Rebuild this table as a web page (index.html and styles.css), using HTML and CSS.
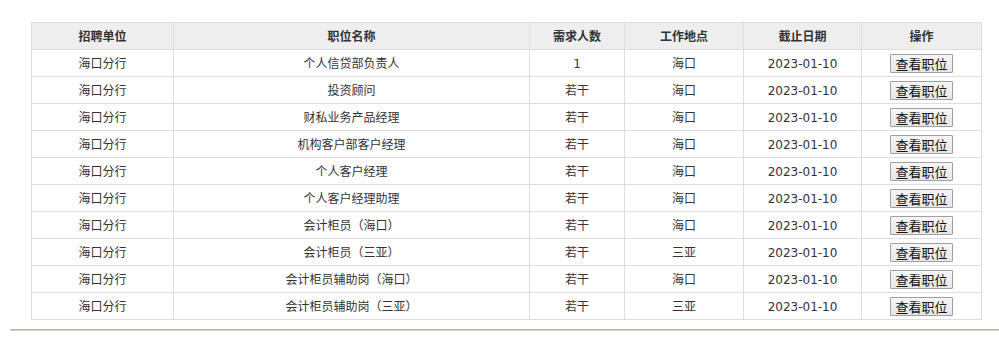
FILE: index.html
```html
<!DOCTYPE html>
<html lang="zh">
<head>
<meta charset="utf-8">
<link rel="stylesheet" href="styles.css">
</head>
<body>
<div class="page">
  <div class="wrap">
    <table class="jobs">
      <colgroup>
        <col class="c1"><col class="c2"><col class="c3"><col class="c4"><col class="c5"><col class="c6">
      </colgroup>
      <thead>
        <tr><th>招聘单位</th><th>职位名称</th><th>需求人数</th><th>工作地点</th><th>截止日期</th><th>操作</th></tr>
      </thead>
      <tbody>
        <tr><td>海口分行</td><td>个人信贷部负责人</td><td>1</td><td>海口</td><td>2023-01-10</td><td class="op"><button class="btn">查看职位</button></td></tr>
        <tr><td>海口分行</td><td>投资顾问</td><td>若干</td><td>海口</td><td>2023-01-10</td><td class="op"><button class="btn">查看职位</button></td></tr>
        <tr><td>海口分行</td><td>财私业务产品经理</td><td>若干</td><td>海口</td><td>2023-01-10</td><td class="op"><button class="btn">查看职位</button></td></tr>
        <tr><td>海口分行</td><td>机构客户部客户经理</td><td>若干</td><td>海口</td><td>2023-01-10</td><td class="op"><button class="btn">查看职位</button></td></tr>
        <tr><td>海口分行</td><td>个人客户经理</td><td>若干</td><td>海口</td><td>2023-01-10</td><td class="op"><button class="btn">查看职位</button></td></tr>
        <tr><td>海口分行</td><td>个人客户经理助理</td><td>若干</td><td>海口</td><td>2023-01-10</td><td class="op"><button class="btn">查看职位</button></td></tr>
        <tr><td>海口分行</td><td>会计柜员（海口）</td><td>若干</td><td>海口</td><td>2023-01-10</td><td class="op"><button class="btn">查看职位</button></td></tr>
        <tr><td>海口分行</td><td>会计柜员（三亚）</td><td>若干</td><td>三亚</td><td>2023-01-10</td><td class="op"><button class="btn">查看职位</button></td></tr>
        <tr><td>海口分行</td><td>会计柜员辅助岗（海口）</td><td>若干</td><td>海口</td><td>2023-01-10</td><td class="op"><button class="btn">查看职位</button></td></tr>
        <tr><td>海口分行</td><td>会计柜员辅助岗（三亚）</td><td>若干</td><td>三亚</td><td>2023-01-10</td><td class="op"><button class="btn">查看职位</button></td></tr>
      </tbody>
    </table>
  </div>
  <div class="rule"></div>
</div>
</body>
</html>
```
FILE: styles.css
```css
html, body {
  margin: 0;
  padding: 0;
  background: #fff;
}
.page {
  font-family: "DejaVu Sans", "Noto Sans CJK SC", sans-serif;
  font-size: 12px;
  color: #333;
  overflow: hidden;
}
.wrap {
  padding: 22px 0 0 31px;
}
.jobs {
  border-collapse: collapse;
  table-layout: fixed;
  width: 950px;
}
.c1 { width: 142px; }
.c2 { width: 356px; }
.c3 { width: 95px; }
.c4 { width: 119px; }
.c5 { width: 118px; }
.c6 { width: 120px; }
.jobs th, .jobs td {
  border: 1px solid #ddd;
  height: 27px;
  padding: 2px 0 0;
  box-sizing: border-box;
  text-align: center;
  vertical-align: middle;
  line-height: 16px;
  white-space: nowrap;
}
.jobs td.op {
  padding: 0;
}
.jobs th {
  background: #eeeeee;
  font-weight: bold;
  color: #333;
}
.jobs td {
  color: #333;
}
.btn {
  font-family: "Noto Sans CJK SC", sans-serif;
  font-size: 13px;
  color: #111;
  height: 19px;
  width: 63px;
  padding: 0;
  line-height: 15px;
  border: 1px solid #a0a0a0;
  background: linear-gradient(#f6f6f6, #e6e6e6);
  border-radius: 1px;
  vertical-align: middle;
}
.rule {
  margin: 9px 0 0 10px;
  width: 1000px;
  height: 0;
  border-top: 1px solid #b5b29e;
  border-bottom: 1px solid #d6d4c6;
}
```
